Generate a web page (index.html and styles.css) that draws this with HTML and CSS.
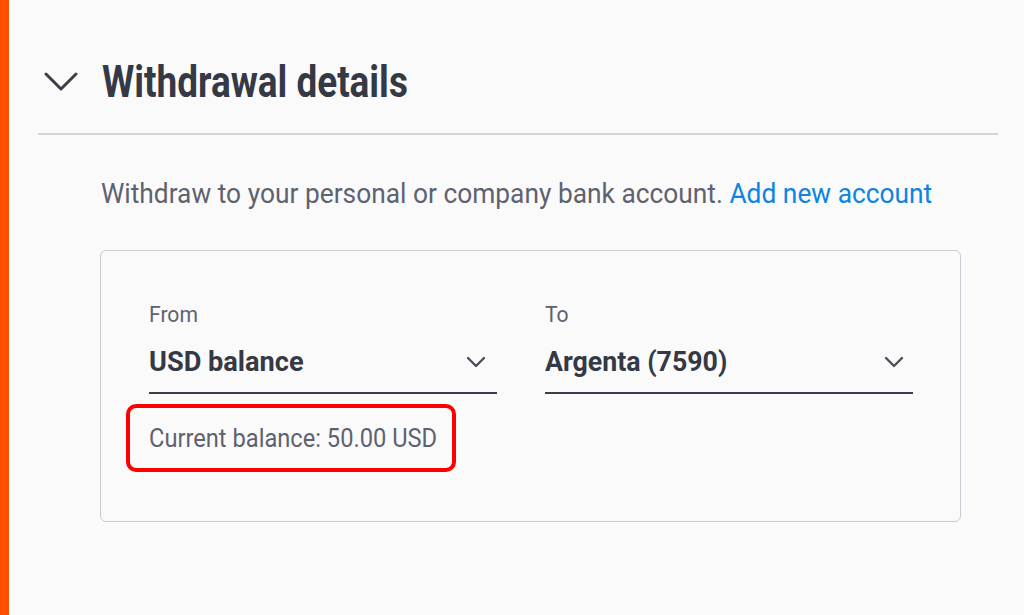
FILE: index.html
```html
<!DOCTYPE html>
<html lang="en">
<head>
  <meta charset="UTF-8">
  <meta name="viewport" content="width=device-width, initial-scale=1.0">
  <title>Withdraw</title>
  <link rel="stylesheet" href="styles.css">
</head>
<body>
  <div class="accent"></div>

  <main class="panel">
    <div class="section-head">
      <svg class="head-chevron" width="34" height="19" viewBox="0 0 34 19">
        <path d="M2 2 L17 17 L32 2" fill="none" stroke="#3b3f4a" stroke-width="3" stroke-linecap="round" stroke-linejoin="round"/>
      </svg>
      <h1><span class="squeeze">Withdrawal details</span></h1>
    </div>

    <div class="section-body">
      <p class="intro"><span class="squeeze">Withdraw to your personal or company bank account. <a href="#">Add new account</a></span></p>

      <div class="card">
        <div class="fields">
          <div class="field from">
            <label><span class="squeeze">From</span></label>
            <div class="select">
              <span class="squeeze">USD balance</span>
              <svg class="select-chevron" width="20" height="12" viewBox="0 0 20 12">
                <path d="M2 2 L10 10 L18 2" fill="none" stroke="#4a4e5a" stroke-width="2.4" stroke-linecap="round" stroke-linejoin="round"/>
              </svg>
            </div>
            <div class="balance"><span class="squeeze">Current balance: 50.00 USD</span></div>
          </div>

          <div class="field to">
            <label><span class="squeeze">To</span></label>
            <div class="select">
              <span class="squeeze narrow">Argenta (7590)</span>
              <svg class="select-chevron" width="20" height="12" viewBox="0 0 20 12">
                <path d="M2 2 L10 10 L18 2" fill="none" stroke="#4a4e5a" stroke-width="2.4" stroke-linecap="round" stroke-linejoin="round"/>
              </svg>
            </div>
          </div>
        </div>
      </div>
    </div>
  </main>
</body>
</html>
```

FILE: styles.css
```css
body {
  margin: 0;
  height: 615px;
  display: flex;
  background: #fafafa;
  font-family: 'Roboto', 'Liberation Sans', sans-serif;
  color: #5e6270;
  overflow: hidden;
}

.accent {
  width: 9px;
  flex: none;
  background: #ff4f00;
}

.panel {
  flex: 1;
  padding: 0 26px 0 29px;
}

.squeeze {
  display: inline-block;
  white-space: nowrap;
  transform-origin: left center;
}

/* header row with collapse chevron */
.section-head {
  display: flex;
  align-items: center;
  gap: 24px;
  padding: 59px 0 29px 6px;
  border-bottom: 2px solid #d3d4db;
}

.section-head h1 {
  margin: 0;
  font-size: 45px;
  line-height: 45px;
  font-weight: 700;
  color: #353945;
}

.section-head h1 .squeeze {
  transform: scaleX(0.82);
}

.section-body {
  padding: 43px 0 0 63px;
}

.intro {
  margin: 0;
  font-size: 27px;
  line-height: 32px;
  color: #5e6270;
}

.intro .squeeze {
  transform: scaleX(0.975);
}

.intro a {
  color: #0b84e3;
  text-decoration: none;
}

.card {
  margin: 40px 37px 0 -1px;
  height: 272px;
  border: 1.5px solid #c9cad3;
  border-radius: 6px;
  box-sizing: border-box;
  padding: 51px 47px 0 48px;
}

.fields {
  display: grid;
  grid-template-columns: 348px 1fr;
  gap: 48px;
}

.field label {
  display: block;
  font-size: 22px;
  line-height: 26px;
  color: #5e6270;
  margin-bottom: 17px;
}

.field label .squeeze {
  transform: scaleX(0.96);
}

.select {
  display: flex;
  align-items: center;
  justify-content: space-between;
  padding-bottom: 13px;
  border-bottom: 2px solid #3b3e48;
  font-size: 28px;
  line-height: 34px;
  font-weight: 700;
  color: #353945;
}

.select .squeeze {
  transform: scaleX(0.97);
}

.select .squeeze.narrow {
  transform: scaleX(0.955);
}

.from .select-chevron {
  margin-right: 11px;
}

.to .select-chevron {
  margin-right: 9px;
}

.balance {
  position: relative;
  margin-top: 29px;
  font-size: 26px;
  line-height: 30px;
  color: #5e6270;
}

.balance .squeeze {
  transform: scaleX(0.91);
}

/* red highlight round the balance line */
.balance::after {
  content: "";
  position: absolute;
  left: -23px;
  width: 330px;
  top: -19px;
  bottom: -19px;
  box-sizing: border-box;
  border: 4px solid #ff0000;
  border-radius: 10px;
}
```
